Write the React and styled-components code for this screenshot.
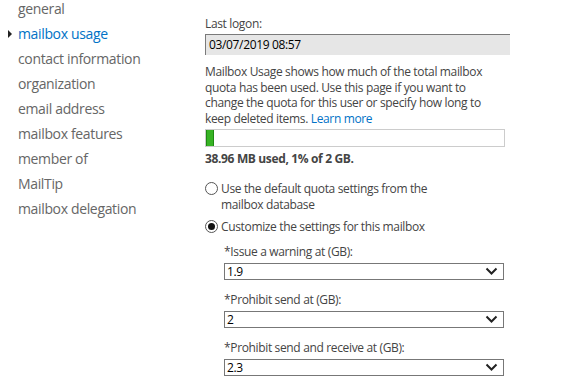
import styled, { createGlobalStyle } from 'styled-components';

const GlobalStyle = createGlobalStyle`
  html, body {
    margin: 0;
    padding: 0;
    background: #ffffff;
    overflow: hidden;
  }
  body {
    font-family: 'Open Sans', 'Noto Sans', sans-serif;
  }
`;

const navItems = [
  'general',
  'mailbox usage',
  'contact information',
  'organization',
  'email address',
  'mailbox features',
  'member of',
  'MailTip',
  'mailbox delegation',
];

const quotas = [
  { label: '*Issue a warning at (GB):', value: '1.9' },
  { label: '*Prohibit send at (GB):', value: '2' },
  { label: '*Prohibit send and receive at (GB):', value: '2.3' },
];

const App = () => {
  return (
    <>
      <GlobalStyle />
      <Page>
        <Nav>
          {navItems.map((item) => (
            <NavItem key={item} $active={item === 'mailbox usage'}>
              {item}
            </NavItem>
          ))}
        </Nav>
        <Content>
          <FieldLabel>Last logon:</FieldLabel>
          <ReadOnlyBox>03/07/2019 08:57</ReadOnlyBox>
          <Description>
            Mailbox Usage shows how much of the total mailbox quota has been
            used. Use this page if you want to change the quota for this user
            or specify how long to keep deleted items. <a href="#">Learn more</a>
          </Description>
          <UsageBar>
            <UsageFill style={{ width: '2.7%' }} />
          </UsageBar>
          <UsageText>38.96 MB used, 1% of 2 GB.</UsageText>
          <RadioRow>
            <Radio />
            <span>Use the default quota settings from the mailbox database</span>
          </RadioRow>
          <RadioRow>
            <Radio $checked />
            <span>Customize the settings for this mailbox</span>
          </RadioRow>
          <QuotaList>
            {quotas.map((q) => (
              <QuotaGroup key={q.label}>
                <FieldLabel>{q.label}</FieldLabel>
                <Select>
                  <span>{q.value}</span>
                  <svg width="13" height="9" viewBox="0 0 13 9">
                    <path
                      d="M1.5 1.5 L6.5 6.5 L11.5 1.5"
                      fill="none"
                      stroke="#222"
                      strokeWidth="2"
                    />
                  </svg>
                </Select>
              </QuotaGroup>
            ))}
          </QuotaList>
        </Content>
      </Page>
    </>
  );
};

const Page = styled.div`
  display: flex;
  width: 583px;
  height: 388px;
`;

const Nav = styled.ul`
  list-style: none;
  margin: -4px 0 0;
  padding: 0;
  width: 205px;
  flex-shrink: 0;
`;

const NavItem = styled.li`
  position: relative;
  height: 25px;
  line-height: 25px;
  padding-left: 18px;
  font-size: 14px;
  letter-spacing: -0.35px;
  color: ${(p) => (p.$active ? '#0072c6' : '#666666')};
  &::before {
    content: '';
    display: ${(p) => (p.$active ? 'block' : 'none')};
    position: absolute;
    left: 8px;
    top: 9px;
    border-left: 4px solid #222;
    border-top: 4px solid transparent;
    border-bottom: 4px solid transparent;
  }
`;

const Content = styled.div`
  display: flex;
  flex-direction: column;
  padding-top: 16px;
  width: 305px;
  font-size: 12px;
  letter-spacing: -0.35px;
  color: #444444;
`;

const FieldLabel = styled.div`
  line-height: 16px;
  color: #444444;
`;

const ReadOnlyBox = styled.div`
  margin-top: 2px;
  height: 21px;
  box-sizing: border-box;
  padding: 0 3px;
  line-height: 19px;
  background: #e6e6e6;
  border-top: 1px solid #7a7a7a;
  border-left: 1px solid #7a7a7a;
  color: #000000;
`;

const Description = styled.p`
  margin: 9px 0 0;
  line-height: 15.5px;
  width: 300px;
  a {
    color: #0072c6;
    text-decoration: none;
  }
`;

const UsageBar = styled.div`
  margin-top: 3px;
  width: 300px;
  height: 18px;
  box-sizing: border-box;
  border: 1px solid #cccccc;
`;

const UsageFill = styled.div`
  height: 100%;
  background: #37b324;
  border-left: 1px solid #1e8a12;
  border-right: 1px solid #1e8a12;
  box-sizing: border-box;
`;

const UsageText = styled.div`
  margin-top: 4px;
  font-weight: bold;
  line-height: 16px;
  color: #444444;
`;

const RadioRow = styled.label`
  display: flex;
  align-items: flex-start;
  gap: 3px;
  margin-top: 14px;
  line-height: 15.5px;
  width: 250px;
  color: #444444;
  & + & {
    margin-top: 7px;
  }
`;

const Radio = styled.span`
  flex-shrink: 0;
  position: relative;
  margin-top: 1px;
  width: 13px;
  height: 13px;
  box-sizing: border-box;
  border: 1px solid #555555;
  border-radius: 50%;
  &::after {
    content: '';
    display: ${(p) => (p.$checked ? 'block' : 'none')};
    position: absolute;
    left: 2px;
    top: 2px;
    width: 7px;
    height: 7px;
    border-radius: 50%;
    background: #111111;
  }
`;

const QuotaList = styled.div`
  display: flex;
  flex-direction: column;
  gap: 12px;
  padding-left: 19px;
  margin-top: 9px;
`;

const QuotaGroup = styled.div`
  display: flex;
  flex-direction: column;
  gap: 3px;
`;

const Select = styled.div`
  display: flex;
  align-items: center;
  justify-content: space-between;
  width: 280px;
  height: 17px;
  box-sizing: border-box;
  padding: 0 5px 0 2px;
  border: 1px solid #777777;
  color: #000000;
  line-height: 15px;
`;

export default App;
